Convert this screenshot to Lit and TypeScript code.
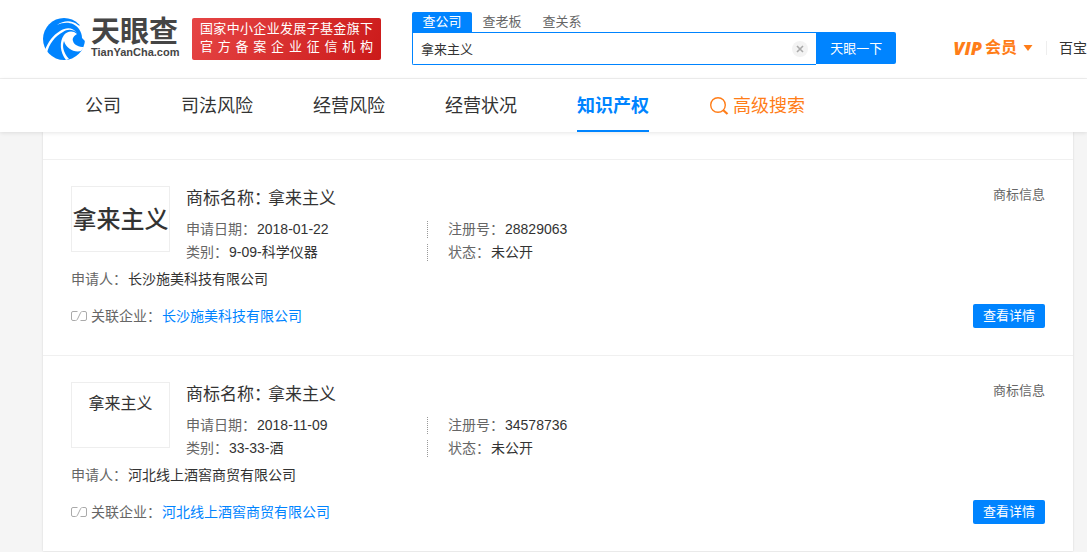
import { LitElement, html, css, svg } from "lit";
import { customElement, property } from "lit/decorators.js";

interface Trademark {
  name: string;
  date: string;
  category: string;
  regNo: string;
  status: string;
  applicant: string;
  mark: "large" | "small";
}

const trademarks: Trademark[] = [
  {
    name: "拿来主义",
    date: "2018-01-22",
    category: "9-09-科学仪器",
    regNo: "28829063",
    status: "未公开",
    applicant: "长沙施美科技有限公司",
    mark: "large",
  },
  {
    name: "拿来主义",
    date: "2018-11-09",
    category: "33-33-酒",
    regNo: "34578736",
    status: "未公开",
    applicant: "河北线上酒窖商贸有限公司",
    mark: "small",
  },
];

const swirl = svg`
  <circle cx="21" cy="21" r="21" fill="#0084ff"/>
  <path d="M14 7 C22 3 31 4 36 11 C38 14 39 17 39 20 L43 24 L44 14 L37 5 C38 8 37 8 35 7 C29 2 21 2 14 7 Z" fill="#fff"/>
  <path d="M34 15 C30 11 24 11 20 14 C12 18 6 26 4 35 L2 32 C5 24 10 17 17 13 C23 9 30 9 34 15 Z" fill="#fff"/>
  <path d="M34 16 C30 12 24 13 21 17 C16 24 17 34 23 42 L26 41 C20 34 19 28 21 23 C23 30 31 35 38 33 L41 29 C36 29 31 27 30 23 C29 20 31 18 34 16 Z" fill="#fff"/>`;

@customElement("site-header")
export class SiteHeader extends LitElement {
  static styles = css`
    :host { display: block; background: #fff; border-bottom: 1px solid #f0f0f0; }
    .bar { display: flex; align-items: flex-start; height: 66px; padding: 12px 0 0 43px; overflow: hidden; white-space: nowrap; }
    a { color: inherit; text-decoration: none; }
    .logo { display: flex; gap: 6px; margin-top: 6px; color: #454545; }
    .logo svg { width: 42px; height: 42px; }
    .words { display: flex; flex-direction: column; width: 88px; }
    .cn { font-size: 29px; line-height: 28px; font-weight: 700; }
    .en { font-size: 11px; line-height: 12px; font-weight: 700; }
    .badge { box-sizing: border-box; width: 189px; height: 42px; margin: 6px 31px 0 13px; padding: 2px 8px; border-radius: 2px; background: linear-gradient(120deg, #e64545, #cb1a1a); color: #fff; font-size: 13px; line-height: 18px; flex: none; }
    .badge span { display: block; text-align-last: justify; }
    .search { flex: 1; min-width: 300px; }
    .tabs { display: flex; }
    .tabs button { width: 60px; height: 20px; padding: 0; border: 0; border-radius: 2px 2px 0 0; background: none; color: #666; font: inherit; font-size: 13px; line-height: 18px; }
    .tabs .on { background: #0084ff; color: #fff; }
    .line { display: flex; }
    .box { box-sizing: border-box; flex: 1; display: flex; align-items: center; height: 33px; padding: 0 8px; border: 1px solid #0084ff; border-right: 0; border-radius: 0 0 0 2px; }
    .box input { flex: 1; min-width: 0; padding: 0; border: 0; outline: 0; background: none; color: #333; font: inherit; font-size: 13px; }
    .clear { display: flex; align-items: center; justify-content: center; width: 16px; height: 16px; padding: 0; border: 0; border-radius: 50%; background: #f3f3f3; }
    .go { width: 80px; height: 32px; padding: 0 0 2px; border: 0; border-radius: 0 2px 2px 0; background: #0084ff; color: #fff; font: inherit; font-size: 13px; }
    .user { flex: none; display: flex; align-items: center; height: 32px; margin: 20px 0 0 57px; }
    .vip { display: flex; align-items: center; color: #ff7d18; font-size: 16px; line-height: 20px; font-weight: 700; }
    .vip i { margin-right: 3px; font-size: 18px; font-weight: 800; font-family: "Open Sans", "Liberation Sans", sans-serif; }
    .vip svg { margin-left: 6px; }
    .tools { margin-left: 13px; padding-left: 12px; border-left: 1px solid #eee; color: #333; font-size: 14px; line-height: 14px; }
  `;

  render() {
    return html`
      <header class="bar">
        <a class="logo" href="#">
          <svg viewBox="0 0 42 42" aria-hidden="true">${swirl}</svg>
          <span class="words"><span class="cn">天眼查</span><span class="en">TianYanCha.com</span></span>
        </a>
        <div class="badge"><span>国家中小企业发展子基金旗下</span><span>官方备案企业征信机构</span></div>
        <form class="search" role="search" @submit=${(e: Event) => e.preventDefault()}>
          <div class="tabs">
            <button type="button" class="on">查公司</button>
            <button type="button">查老板</button>
            <button type="button">查关系</button>
          </div>
          <div class="line">
            <div class="box">
              <input type="text" aria-label="查公司" .value=${"拿来主义"} />
              <button type="reset" class="clear">
                <svg width="8" height="8" viewBox="0 0 8 8" aria-hidden="true"><path d="M1 1 L7 7 M7 1 L1 7" stroke="#aaa" stroke-width="1.6"/></svg>
              </button>
            </div>
            <button class="go">天眼一下</button>
          </div>
        </form>
        <div class="user">
          <a class="vip" href="#"><i>VIP</i>会员<svg width="10" height="6" viewBox="0 0 9 6" aria-hidden="true"><path d="M0 0 H9 L4.5 6 Z" fill="#ff7d18"/></svg></a>
          <a class="tools" href="#">百宝</a>
        </div>
      </header>`;
  }
}

@customElement("site-nav")
export class SiteNav extends LitElement {
  static styles = css`
    :host { display: block; position: relative; background: #fff; box-shadow: 0 1px 4px rgba(0, 0, 0, 0.1); }
    nav { display: flex; gap: 60px; height: 53px; padding-left: 85px; white-space: nowrap; }
    a { box-sizing: border-box; height: 53px; padding-top: 1px; color: #333; font-size: 18px; line-height: 52px; text-decoration: none; }
    .on { border-bottom: 2px solid #0084ff; color: #0084ff; font-weight: 700; }
    .more { display: flex; align-items: center; gap: 4px; color: #ff7d18; }
  `;

  render() {
    return html`
      <nav>
        <a href="#">公司</a>
        <a href="#">司法风险</a>
        <a href="#">经营风险</a>
        <a href="#">经营状况</a>
        <a href="#" class="on">知识产权</a>
        <a href="#" class="more">
          <svg width="20" height="20" viewBox="0 0 20 20" fill="none" stroke="#ff7d18" aria-hidden="true">
            <circle cx="9" cy="9" r="7.3" stroke-width="1.4"/><path d="M14 14 L18.5 18" stroke-width="2.2"/>
          </svg>高级搜索</a>
      </nav>`;
  }
}

@customElement("trademark-item")
export class TrademarkItem extends LitElement {
  @property({ attribute: false }) item!: Trademark;

  static styles = css`
    :host { display: block; padding: 26px 28px 27px; border-top: 1px solid #f0f0f0; font-size: 14px; color: #333; }
    .top { display: flex; gap: 16px; }
    .mark { box-sizing: border-box; width: 99px; height: 66px; border: 1px solid #eee; display: flex; justify-content: center; white-space: nowrap; color: #333; }
    .large { font-size: 24px; line-height: 66px; font-weight: 500; }
    .small { font-size: 16px; line-height: 42px; }
    .info { flex: 1; }
    h3 { margin: 0 0 6px; font-size: 17px; line-height: 26px; font-weight: 400; }
    h3 span { margin-left: -3px; }
    dl { display: grid; grid-template-columns: 241px 1fr; margin: 0; line-height: 23px; }
    dl div { display: flex; align-items: center; }
    dl div:nth-child(even)::before { content: ""; height: 17px; margin-right: 20px; border-left: 1px dotted #999; }
    dt { color: #666; }
    dd { margin: 0 0 0 1px; }
    .kind { color: #666; font-size: 13px; line-height: 18px; }
    .label { margin-right: 1px; color: #666; }
    .applicant { margin: 3px 0 13px; line-height: 24px; }
    .foot { display: flex; align-items: center; gap: 4px; line-height: 24px; }
    .foot a { color: #0084ff; text-decoration: none; }
    .foot button { width: 72px; height: 24px; margin-left: auto; padding: 0; border: 0; border-radius: 2px; background: #0084ff; color: #fff; font: inherit; font-size: 13px; }
  `;

  render() {
    const t = this.item;
    return html`
      <div class="top">
        <div class="mark ${t.mark}">${t.name}</div>
        <div class="info">
          <h3>商标名称：<span>${t.name}</span></h3>
          <dl>
            <div><dt>申请日期：</dt><dd>${t.date}</dd></div>
            <div><dt>注册号：</dt><dd>${t.regNo}</dd></div>
            <div><dt>类别：</dt><dd>${t.category}</dd></div>
            <div><dt>状态：</dt><dd>${t.status}</dd></div>
          </dl>
        </div>
        <div class="kind">商标信息</div>
      </div>
      <div class="applicant"><span class="label">申请人：</span>${t.applicant}</div>
      <div class="foot">
        <svg width="16" height="12" viewBox="0 0 16 12" fill="none" stroke="#aaa" aria-hidden="true">
          <path d="M6.5 1.5 H2 Q0.5 1.5 0.5 3 V9 Q0.5 10.5 2 10.5 H4.5 Q5.7 10.5 6.3 9.5 L9.7 2.5 Q10.3 1.5 11.5 1.5 H14 Q15.5 1.5 15.5 3 V9 Q15.5 10.5 14 10.5 H9.5"/>
        </svg>
        <div><span class="label">关联企业：</span><a href="#">${t.applicant}</a></div>
        <button>查看详情</button>
      </div>`;
  }
}

@customElement("app-root")
export class AppRoot extends LitElement {
  static styles = css`
    :host { display: block; min-height: 100vh; background: #f5f5f5; overflow: hidden; font-family: "Liberation Sans", "Noto Sans CJK SC", sans-serif; }
    main { margin: 0 14px 1px 43px; padding-top: 27px; background: #fff; box-shadow: 0 0 2px rgba(0, 0, 0, 0.14); }
  `;

  render() {
    return html`
      <site-header></site-header>
      <site-nav></site-nav>
      <main>${trademarks.map((t) => html`<trademark-item .item=${t}></trademark-item>`)}</main>`;
  }
}
